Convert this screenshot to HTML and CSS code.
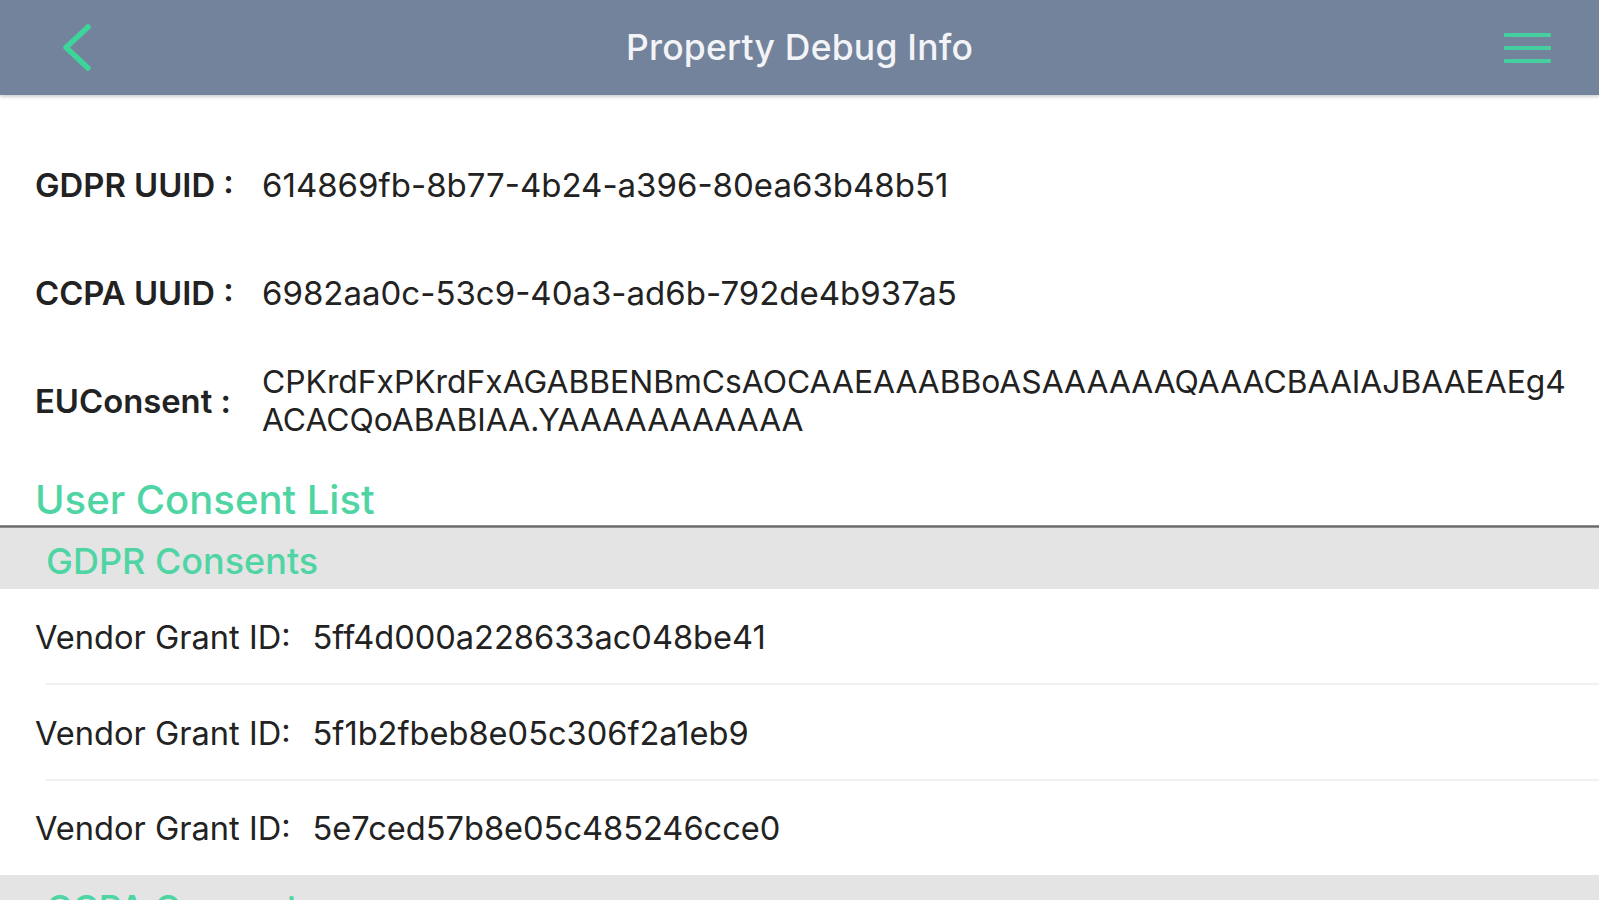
FILE: index.html
```html
<!DOCTYPE html>
<html lang="en">
<head>
<meta charset="utf-8">
<title>Property Debug Info</title>
<link rel="stylesheet" href="styles.css">
</head>
<body>
<header class="topbar">
  <button class="icon-btn back" aria-label="Back">
    <svg width="34" height="50" viewBox="0 0 34 50"><polyline points="28,4 6,24.5 28,45" fill="none" stroke="#3ed59a" stroke-width="5.5" stroke-linecap="round" stroke-linejoin="round"/></svg>
  </button>
  <h1 class="title">Property Debug Info</h1>
  <button class="icon-btn menu" aria-label="Menu">
    <span class="bar"></span><span class="bar"></span><span class="bar"></span>
  </button>
</header>

<main>
  <section class="info">
    <div class="info-row">
      <div class="info-label">GDPR UUID :</div>
      <div class="info-value">614869fb-8b77-4b24-a396-80ea63b48b51</div>
    </div>
    <div class="info-row">
      <div class="info-label">CCPA UUID :</div>
      <div class="info-value">6982aa0c-53c9-40a3-ad6b-792de4b937a5</div>
    </div>
    <div class="info-row">
      <div class="info-label">EUConsent :</div>
      <div class="info-value multi"><span class="line">CPKrdFxPKrdFxAGABBENBmCsAOCAAEAAABBoASAAAAAAQAAACBAAIAJBAAEAEg4</span><span class="line">ACACQoABABIAA.YAAAAAAAAAAA</span></div>
    </div>
  </section>

  <h2 class="list-title">User Consent List</h2>
  <div class="divider"></div>

  <section class="group">
    <h3 class="group-head">GDPR Consents</h3>
    <ul class="vendors">
      <li class="vendor"><span class="v-label">Vendor Grant ID:</span><span class="v-id">5ff4d000a228633ac048be41</span></li>
      <li class="vendor"><span class="v-label">Vendor Grant ID:</span><span class="v-id">5f1b2fbeb8e05c306f2a1eb9</span></li>
      <li class="vendor"><span class="v-label">Vendor Grant ID:</span><span class="v-id">5e7ced57b8e05c485246cce0</span></li>
    </ul>
  </section>

  <section class="group">
    <h3 class="group-head">CCPA Consents</h3>
  </section>
</main>
</body>
</html>
```

FILE: styles.css
```css
* { box-sizing: border-box; }

html, body {
  margin: 0;
  padding: 0;
  background: #ffffff;
  overflow: hidden;
}

body {
  font-family: Inter, "Liberation Sans", Arial, sans-serif;
  color: #1f1f21;
  height: 900px;
}

.topbar {
  height: 95px;
  background: #74839c;
  display: grid;
  grid-template-columns: 1fr auto 1fr;
  align-items: center;
  padding: 0 48px;
  box-shadow: 0 2px 3px rgba(60, 70, 90, 0.25);
  position: relative;
  z-index: 2;
}

.icon-btn {
  background: none;
  border: 0;
  padding: 0;
  margin: 0;
  display: flex;
  cursor: pointer;
}

.back { justify-self: start; margin: 1px 0 0 12px; }

.menu {
  justify-self: end;
  flex-direction: column;
  gap: 9px;
  width: 47px;
}

.menu .bar {
  display: block;
  height: 4px;
  width: 47px;
  background: #45cf9f;
  border-radius: 1px;
}

.title {
  margin: 0;
  font-size: 35.5px;
  font-weight: 500;
  color: #f2f4f7;
  letter-spacing: 0.2px;
}

.info {
  padding: 36px 30px 0 35px;
}

.info-row {
  display: grid;
  grid-template-columns: 227px 1fr;
  align-items: center;
  height: 108px;
}

.info-label {
  font-size: 32.8px;
  font-weight: 600;
  color: #222;
}

.info-value {
  font-size: 33px;
  color: #222;
  white-space: nowrap;
}

.info-value.multi {
  font-size: 31.8px;
}

.info-value.multi .line {
  display: block;
  line-height: 38px;
}

.list-title {
  margin: 0;
  padding: 22px 0 0 35px;
  height: 70px;
  line-height: 46px;
  font-size: 40px;
  font-weight: 500;
  color: #4fd5a3;
}

.divider {
  height: 3px;
  background: linear-gradient(#a0a0a0, #6a6a6a 50%, #a0a0a0);
}

.group-head {
  margin: 0;
  height: 61px;
  padding: 4px 0 0 46px;
  display: flex;
  align-items: center;
  background: #e4e4e4;
  font-size: 36px;
  font-weight: 500;
  color: #4fd5a3;
}

.vendors {
  list-style: none;
  margin: 0;
  padding: 0;
}

.vendor {
  height: 96px;
  display: flex;
  align-items: center;
  gap: 22px;
  padding-left: 35px;
  font-size: 32.6px;
  color: #222;
  position: relative;
}

.vendor::after {
  content: "";
  position: absolute;
  left: 46px;
  right: 0;
  bottom: 0;
  height: 2px;
  background: #f1f1f1;
}

.vendor:last-child { height: 94px; }
.vendor:last-child::after { display: none; }
```
